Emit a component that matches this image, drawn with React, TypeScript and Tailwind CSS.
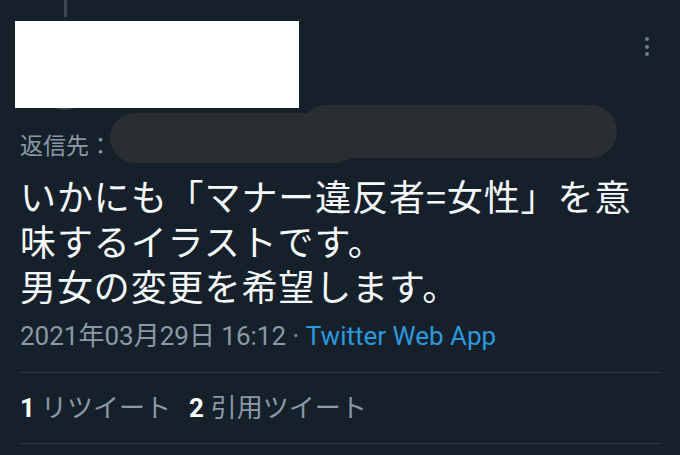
import React from "react";

export default function App() {
  return (
    <div className="relative w-[680px] h-[455px] overflow-hidden bg-[#15202b] font-['Roboto','Noto_Sans_CJK_JP',sans-serif]">
      {/* header: thread line, avatar, name (redacted), menu */}
      <div className="relative flex h-[130px] items-start">
        <div className="flex w-[130px] flex-col items-center">
          <div className="h-[17px] w-[3px] bg-[#3d4853]" />
          <div className="mt-[41px] h-[52px] w-[52px] rounded-full bg-[#3a3f45]" />
        </div>
        <div className="flex-1" />
        <div className="mr-[31px] mt-[37px] flex flex-col items-center gap-[3.5px]">
          <span className="h-[4px] w-[4px] rounded-full bg-[#6f7e8c]" />
          <span className="h-[4px] w-[4px] rounded-full bg-[#6f7e8c]" />
          <span className="h-[4px] w-[4px] rounded-full bg-[#6f7e8c]" />
        </div>
        {/* redaction box over the name */}
        <div className="absolute left-[15px] top-[21px] h-[87px] w-[284px] bg-white" />
      </div>

      {/* reply-to line */}
      <div className="relative h-[28px] pl-[20px] text-[23px] leading-[28px] text-[#8b98a5] font-['Noto_Sans_CJK_JP',sans-serif]">
        返信先：
        <div className="absolute left-[110px] top-[-17px] h-[50px] w-[250px] rounded-full bg-[#2a2e33]" />
        <div className="absolute left-[300px] top-[-25px] h-[53px] w-[317px] rounded-full bg-[#2a2e33]" />
      </div>

      {/* tweet body */}
      <div className="mt-[15px] pl-[20px] text-[36px] leading-[45px] tracking-[0.9px] text-[#f5f8fa] font-['Noto_Sans_CJK_JP',sans-serif] whitespace-nowrap">
        <div>いかにも「マナー違反者=女性」を意</div>
        <div>味するイラストです。</div>
        <div>男女の変更を希望します。</div>
      </div>

      {/* timestamp */}
      <div className="mt-[12px] pl-[20px] text-[26px] leading-[32px] text-[#8b98a5] whitespace-nowrap">
        2021年03月29日 16:12 · <span className="text-[#2c98de]">Twitter Web App</span>
      </div>

      {/* stats */}
      <div className="ml-[20px] mr-[18px] mt-[20px] flex h-[72px] items-center border-y border-[#2b3640] text-[26px] whitespace-nowrap">
        <span className="font-bold text-white">1</span>
        <span className="ml-[6px] text-[#8b98a5]">リツイート</span>
        <span className="ml-[18px] font-bold text-white">2</span>
        <span className="ml-[7px] text-[#8b98a5]">引用ツイート</span>
      </div>
    </div>
  );
}
